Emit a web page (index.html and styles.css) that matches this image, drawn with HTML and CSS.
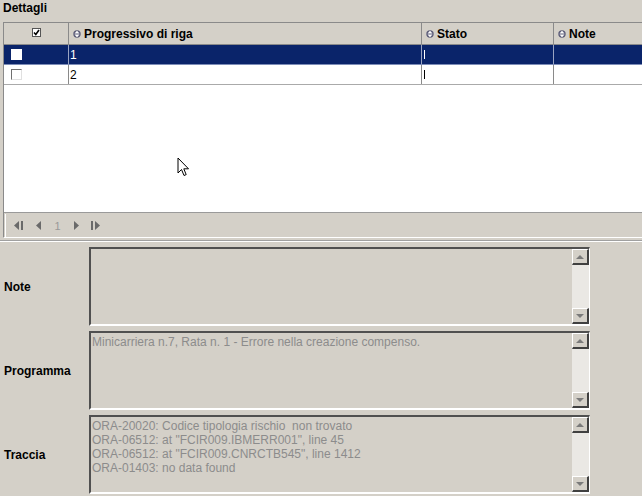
FILE: index.html
```html
<!DOCTYPE html>
<html>
<head>
<meta charset="utf-8">
<link rel="stylesheet" href="styles.css">
</head>
<body>
<div class="title">Dettagli</div>
<div class="grid">
  <div class="table">
    <div class="row head">
      <div class="cell c0"><span class="hcheck"><svg width="9" height="9" viewBox="0 0 9 9"><rect x="0.5" y="0.5" width="8" height="8" fill="#fff" stroke="#555"/><path d="M2 4.5 L3.8 6.5 L7 2" stroke="#000" stroke-width="1.6" fill="none"/></svg></span></div>
      <div class="cell c1"><span class="sort"><svg width="8" height="8" viewBox="0 0 8 8"><circle cx="4" cy="4" r="3.7" fill="#5c5c78"/><path d="M4 0.8 L6.5 3.6 H1.5Z M4 7.2 L6.5 4.4 H1.5Z" fill="#fff"/></svg></span>Progressivo di riga</div>
      <div class="cell c2"><span class="sort"><svg width="8" height="8" viewBox="0 0 8 8"><circle cx="4" cy="4" r="3.7" fill="#5c5c78"/><path d="M4 0.8 L6.5 3.6 H1.5Z M4 7.2 L6.5 4.4 H1.5Z" fill="#fff"/></svg></span>Stato</div>
      <div class="cell c3"><span class="sort"><svg width="8" height="8" viewBox="0 0 8 8"><circle cx="4" cy="4" r="3.7" fill="#5c5c78"/><path d="M4 0.8 L6.5 3.6 H1.5Z M4 7.2 L6.5 4.4 H1.5Z" fill="#fff"/></svg></span>Note</div>
    </div>
    <div class="row sel">
      <div class="cell c0"><span class="cb"></span></div>
      <div class="cell c1">1</div>
      <div class="cell c2"><span class="bar"></span></div>
      <div class="cell c3"></div>
    </div>
    <div class="row">
      <div class="cell c0"><span class="cb"></span></div>
      <div class="cell c1">2</div>
      <div class="cell c2"><span class="bar"></span></div>
      <div class="cell c3"></div>
    </div>
    <div class="empty"></div>
  </div>
  <div class="pager">
    <svg width="12" height="11" viewBox="0 0 12 11"><path d="M6 1 L1 5.5 L6 10Z" fill="#6a6a6a"/><rect x="8" y="1" width="2" height="9" fill="#6a6a6a"/></svg>
    <svg width="8" height="11" viewBox="0 0 8 11"><path d="M6 1 L1 5.5 L6 10Z" fill="#6a6a6a"/></svg>
    <span class="pnum">1</span>
    <svg width="8" height="11" viewBox="0 0 8 11"><path d="M2 1 L7 5.5 L2 10Z" fill="#6a6a6a"/></svg>
    <svg width="12" height="11" viewBox="0 0 12 11"><rect x="1" y="1" width="2" height="9" fill="#6a6a6a"/><path d="M5 1 L10 5.5 L5 10Z" fill="#6a6a6a"/></svg>
  </div>
</div>
<div class="sep"></div>
<div class="form">
  <div class="frow">
    <div class="label">Note</div>
    <div class="box"><div class="txt"></div><div class="sb"><span class="btn up"></span><span class="track"></span><span class="btn down"></span></div></div>
  </div>
  <div class="frow">
    <div class="label">Programma</div>
    <div class="box"><div class="txt">Minicarriera n.7, Rata n. 1 - Errore nella creazione compenso.</div><div class="sb"><span class="btn up"></span><span class="track"></span><span class="btn down"></span></div></div>
  </div>
  <div class="frow">
    <div class="label">Traccia</div>
    <div class="box"><div class="txt">ORA-20020: Codice tipologia rischio &nbsp;non trovato<br>ORA-06512: at "FCIR009.IBMERR001", line 45<br>ORA-06512: at "FCIR009.CNRCTB545", line 1412<br>ORA-01403: no data found</div><div class="sb"><span class="btn up"></span><span class="track"></span><span class="btn down"></span></div></div>
  </div>
</div>
<svg class="cursor" width="14" height="22" viewBox="0 0 14 22"><path d="M1 1 L1 16 L4.5 12.5 L7 18.5 L9.2 17.6 L6.8 11.8 L11.5 11.8 Z" fill="#fff" stroke="#000" stroke-width="1" stroke-linejoin="miter"/></svg>
</body>
</html>
```
FILE: styles.css
```css
html, body {
  margin: 0;
  padding: 0;
  background: #d4d0c8;
  font-family: "Liberation Sans", Arial, sans-serif;
  overflow: hidden;
}
body {
  width: 642px;
  height: 496px;
  position: relative;
}
.title {
  font-weight: bold;
  font-size: 12px;
  height: 22px;
  line-height: 17px;
  padding-left: 3px;
  color: #000;
}
.grid {
  margin-left: 3px;
  width: 660px;
  border-top: 1px solid #8a8a8a;
  border-left: 1px solid #8a8a8a;
  border-bottom: 1px solid #ffffff;
}
.table {
  background: #fff;
  height: 189px;
  border-bottom: 1px solid #9a9a9a;
}
.row {
  display: flex;
  height: 20px;
  border-bottom: 1px solid #aaa;
  box-sizing: border-box;
  font-size: 12px;
}
.row.head {
  height: 22px;
  background: #d4d0c8;
  font-weight: bold;
  border-bottom: 1px solid #8a8a8a;
}
.row.sel {
  background: #0a246a;
  color: #fff;
  border-bottom: 1px solid #7d8db8;
}
.cell {
  box-sizing: border-box;
  border-right: 1px solid #8a8a8a;
  display: flex;
  align-items: center;
  padding-left: 1px;
  white-space: nowrap;
}
.head .cell { padding-left: 4px; }
.c0 { width: 65px; justify-content: flex-start; }
.head .c0 { justify-content: center; padding-left: 0; }
.c1 { width: 353px; }
.c2 { width: 132px; }
.c3 { width: 110px; border-right: none; }
.sel .cell { border-right-color: #9aa4c2; }
.hcheck { display: flex; margin-top: -2px; }
.sort { display: inline-flex; margin-right: 3px; }
.bar {
  width: 1px;
  height: 9px;
  background: #000;
  margin-left: 1px;
}
.sel .bar { background: #fff; }
.cb {
  width: 11px;
  height: 11px;
  margin-left: 6px;
  box-sizing: border-box;
  background: #fff;
  border-top: 1px solid #707070;
  border-left: 1px solid #707070;
  border-right: 1px solid #e0e0e0;
  border-bottom: 1px solid #e0e0e0;
}
.sel .cb { border-color: #fff; }
.empty { height: 126px; }
.pager {
  height: 23px;
  display: flex;
  align-items: center;
  gap: 10px;
  padding-left: 7px;
  border-left: 1px solid #fff;
  margin-left: 1px;
  box-sizing: border-box;
  margin-top: 1px;
}
.pnum {
  font-size: 11px;
  color: #999;
  width: 9px;
  text-align: center;
}
.sep {
  margin-top: 2px;
  height: 1px;
  background: #a0a0a0;
  border-bottom: 1px solid #fff;
}
.form {
  padding-top: 5px;
  display: flex;
  flex-direction: column;
  gap: 5px;
}
.frow {
  display: flex;
  align-items: center;
}
.label {
  width: 89px;
  padding-left: 4px;
  box-sizing: border-box;
  font-weight: bold;
  font-size: 12px;
}
.box {
  width: 501px;
  height: 79px;
  box-sizing: border-box;
  border-top: 2px solid #505050;
  border-left: 2px solid #505050;
  border-right: 1px solid #fff;
  border-bottom: 2px solid #fff;
  display: flex;
  background: #d4d0c8;
}
.txt {
  flex: 1;
  font-size: 12px;
  line-height: 14px;
  color: #8c8c8c;
  padding: 2px 0 0 1px;
}
.sb {
  width: 17px;
  display: flex;
  flex-direction: column;
  background: #eae8e4;
}
.track { flex: 1; }
.btn {
  height: 16px;
  box-sizing: border-box;
  background: #d4d0c8;
  border-top: 1px solid #fff;
  border-left: 1px solid #fff;
  border-right: 2px solid #404040;
  border-bottom: 2px solid #404040;
  display: flex;
  align-items: center;
  justify-content: center;
}
.btn::after {
  content: "";
  width: 0;
  height: 0;
  border-left: 4px solid transparent;
  border-right: 4px solid transparent;
}
.up::after { border-bottom: 4px solid #7a7a7a; }
.down::after { border-top: 4px solid #7a7a7a; }
.cursor {
  position: absolute;
  left: 177px;
  top: 157px;
}
```
